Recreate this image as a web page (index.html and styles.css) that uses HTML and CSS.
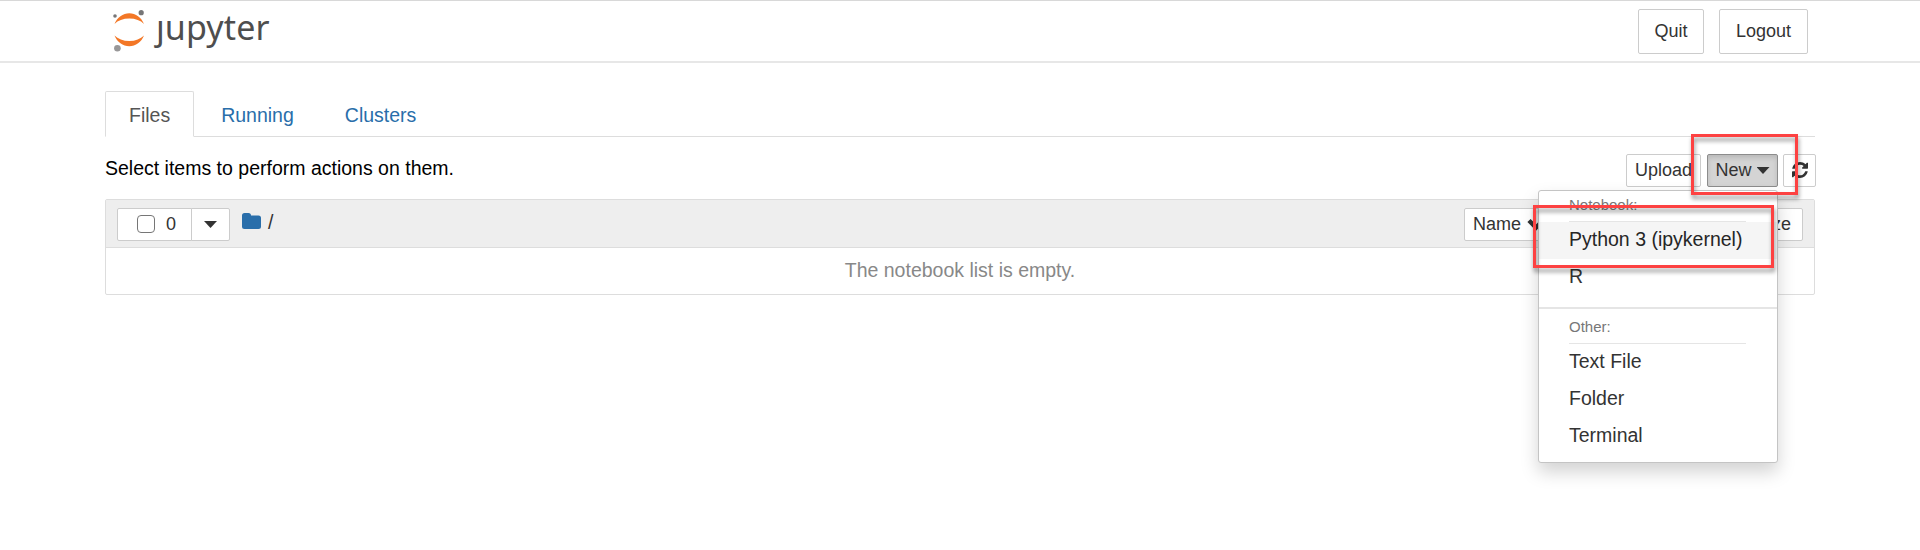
FILE: index.html
```
<!DOCTYPE html>
<html lang="en">
<head>
<meta charset="utf-8">
<title>Home Page - Jupyter Notebook</title>
<link rel="stylesheet" href="styles.css">
</head>
<body>
<header class="header">
  <a class="brand">
    <svg class="logo" width="34" height="42" viewBox="0 0 34 42">
      <path d="M1.500 14C4 7.500 10 3.300 16.300 3.300S28.500 7.500 31 14C27.500 10.500 22.500 8.600 16.300 8.600S5 10.500 1.500 14Z" fill="#f37726"/>
      <path d="M1.500 25.500C4 32 10 36.200 16.300 36.200S28.500 32 31 25.500C27.500 29 22.500 31 16.300 31S5 29 1.500 25.500Z" fill="#f37726"/>
      <circle cx="28.200" cy="2.700" r="2.600" fill="#767677"/>
      <circle cx="2" cy="6" r="1.800" fill="#767677"/>
      <circle cx="4.400" cy="38.300" r="3.300" fill="#989798"/>
    </svg>
    <span class="wordmark">ȷupyter</span>
  </a>
  <div class="session">
    <button class="btn btn-session quit">Quit</button>
    <button class="btn btn-session logout">Logout</button>
  </div>
</header>
<main class="container">
  <nav class="tabs">
    <a class="tab active">Files</a>
    <a class="tab">Running</a>
    <a class="tab">Clusters</a>
  </nav>
  <div class="toolbar">
    <span class="hint">Select items to perform actions on them.</span>
    <div class="actions">
      <button class="btn upload">Upload</button>
      <div class="new-wrap">
        <button class="btn new">New<span class="caret"></span></button>
        <div class="menu">
          <div class="menu-header">Notebook:</div>
          <a class="item hover">Python 3 (ipykernel)</a>
          <a class="item">R</a>
          <div class="separator"></div>
          <div class="menu-header">Other:</div>
          <a class="item">Text File</a>
          <a class="item">Folder</a>
          <a class="item">Terminal</a>
          <div class="callout callout-kernel"></div>
        </div>
        <div class="callout callout-new"></div>
      </div>
      <button class="btn refresh"><svg width="16" height="16" viewBox="0 0 1536 1536"><path fill="#333" d="M1511 928q0 5-1 7-64 268-268 434.500T764 1536q-146 0-282.500-55T238 1324l-129 129q-19 19-45 19t-45-19-19-45V960q0-26 19-45t45-19h448q26 0 45 19t19 45-19 45l-137 137q71 66 161 102t187 36q134 0 250-65t186-179q11-17 53-117 8-23 30-23h192q13 0 22.500 9.500t9.500 22.500zm25-800v448q0 26-19 45t-45 19h-448q-26 0-45-19t-19-45 19-45l138-138Q969 256 768 256q-134 0-250 65T332 500q-11 17-53 117-8 23-30 23H50q-13 0-22.500-9.500T18 608v-7q65-268 270-434.500T768 0q146 0 284 55.500T1297 212l130-129q19-19 45-19t45 19 19 45z"/></svg></button>
    </div>
  </div>
  <section class="list">
    <div class="list-header">
      <div class="select-group">
        <button class="btn select-all"><span class="checkbox"></span>0</button>
        <button class="btn select-menu"><span class="caret"></span></button>
      </div>
      <div class="path">
        <svg width="19" height="16" viewBox="0 0 19 16"><path fill="#296eaa" d="M2.500 0H6.500Q9 0 9 2.500H16.500Q19 2.500 19 5V13.500Q19 16 16.500 16H2.500Q0 16 0 13.500V2.500Q0 0 2.500 0Z"/></svg>
        <span>/</span>
      </div>
      <div class="sort">
        <button class="btn sort-name">Name <svg width="18" height="13" viewBox="0 0 18 13"><path d="M2 2.500 9 9.500 16 2.500" fill="none" stroke="#333" stroke-width="4.500"/></svg></button>
        <button class="btn sort-size">File size</button>
      </div>
    </div>
    <div class="empty">The notebook list is empty.</div>
  </section>
</main>
</body>
</html>
```
FILE: styles.css
```
* { box-sizing: border-box; }

body {
  margin: 0;
  height: 550px;
  overflow: hidden;
  background: #fff;
  color: #000;
  font-family: "Liberation Sans", Arial, sans-serif;
  font-size: 19.5px;
  line-height: 28px;
}

.header {
  display: flex;
  justify-content: space-between;
  height: 63px;
  padding: 8px 112px 0 113px;
  border-top: 1px solid #d8d8d8;
  border-bottom: 2px solid #e7e7e7;
}

.brand { display: flex; }
.logo { margin-top: 1px; }
.wordmark {
  margin: 0 0 0 9px;
  color: #4e4e4e;
  font-family: "Noto Sans", sans-serif;
  font-size: 34px;
  line-height: 36px;
  letter-spacing: 0.1px;
}

.session { display: flex; gap: 15px; }

.btn {
  display: flex;
  align-items: center;
  justify-content: center;
  height: 33px;
  margin: 0;
  padding: 0 0 2px;
  border: 1px solid #ccc;
  border-radius: 2px;
  background: #fff;
  color: #333;
  font: inherit;
  font-size: 18px;
  line-height: 28px;
  white-space: nowrap;
}

.btn-session { height: 45px; }
.quit { width: 66px; }
.logout { width: 89px; }

.container { padding: 28px 105px 0; }

.tabs {
  display: flex;
  height: 46px;
  border-bottom: 1px solid #ddd;
}
.tab {
  height: 46px;
  margin-right: 3px;
  padding: 9px 23px 0;
  border: 1px solid transparent;
  border-radius: 2px 2px 0 0;
  color: #296eaa;
}
.tab.active {
  border-color: #ddd;
  border-bottom-color: #fff;
  background: #fff;
  color: #555;
}

.toolbar {
  display: flex;
  justify-content: space-between;
  height: 62px;
  padding-top: 17px;
}
.actions { display: flex; margin-right: -1px; }
.upload { width: 75px; }
.new-wrap { position: relative; margin: 0 5px 0 6px; }
.new {
  width: 71px;
  border-color: #8c8c8c;
  background: #d4d4d4;
  box-shadow: inset 0 3px 5px rgba(0, 0, 0, 0.125);
}
.refresh { width: 33px; }

.caret {
  width: 13px;
  height: 7px;
  margin-top: 2px;
  background: #333;
  clip-path: polygon(0 0, 100% 0, 50% 100%);
}
.new .caret { margin-left: 5px; }

.menu {
  position: absolute;
  z-index: 2;
  top: 36px;
  right: 0;
  width: 240px;
  height: 273px;
  border: 1px solid #c4c4c4;
  border-radius: 3px;
  background: #fff;
  box-shadow: 0 9px 18px rgba(0, 0, 0, 0.175);
}
.menu-header {
  height: 31px;
  margin: 0 31px 0 30px;
  padding-top: 2px;
  border-bottom: 1px solid #e5e5e5;
  color: #777;
  font-size: 15px;
  line-height: 24px;
}
.item {
  display: block;
  height: 37px;
  padding: 3px 30px 0;
  color: #333;
}
.item.hover { background: #f5f5f5; color: #262626; }
.separator {
  height: 2px;
  margin: 11px 0 4px;
  background: #e5e5e5;
}

.callout {
  position: absolute;
  z-index: 3;
  border: 3px solid #fd4242;
  filter: drop-shadow(1px 4px 2px rgba(0, 0, 0, 0.4));
}
.callout-new { left: -16px; top: -20px; width: 107px; height: 61px; }
.callout-kernel { left: -6px; top: 14px; width: 241px; height: 63px; }

.list {
  height: 96px;
  border: 1px solid #ddd;
  border-radius: 2px;
}
.list-header {
  display: flex;
  height: 48px;
  padding: 8px 11px 0;
  border-bottom: 1px solid #ddd;
  background: #eee;
}
.select-group { display: flex; }
.select-all {
  justify-content: flex-start;
  width: 75px;
  padding-left: 19px;
  border-radius: 2px 0 0 2px;
  gap: 11px;
}
.select-menu { width: 39px; margin-left: -1px; border-radius: 0 2px 2px 0; }
.checkbox {
  width: 18px;
  height: 18px;
  border: 1.500px solid #767676;
  border-radius: 4px;
}
.path { display: flex; gap: 7px; margin-left: 12px; color: #333; }
.path svg { margin-top: 5px; }
.sort { display: flex; margin-left: auto; }
.sort-name { justify-content: flex-start; width: 96px; padding-left: 8px; gap: 6px; }
.sort-name svg { margin-top: 2px; }
.sort-size { justify-content: flex-end; width: 84px; margin-left: 159px; padding-right: 11px; }

.empty {
  padding-top: 8px;
  color: #888;
  text-align: center;
}
```
